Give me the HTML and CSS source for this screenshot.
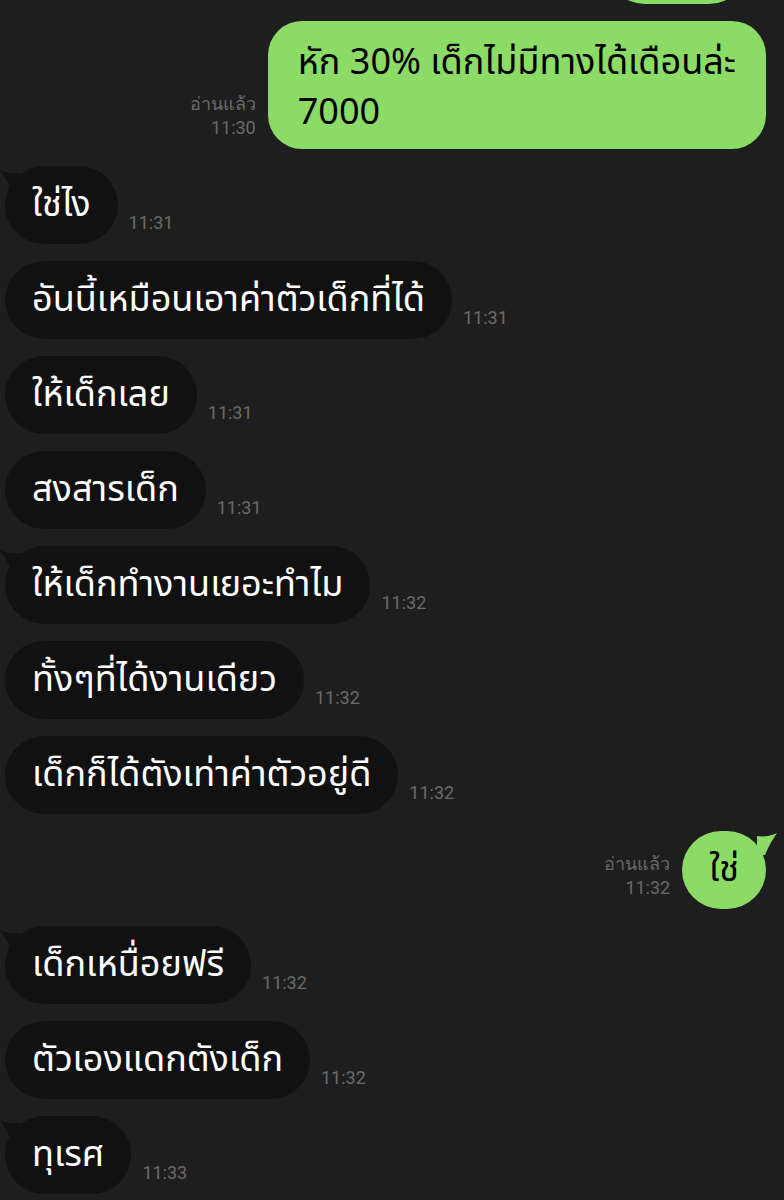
FILE: index.html
```html
<!DOCTYPE html>
<html lang="th">
<head>
  <meta charset="UTF-8" />
  <meta name="viewport" content="width=device-width, initial-scale=1.0" />
  <title>Chat</title>
  <link rel="stylesheet" href="styles.css">
</head>
<body>
  <main class="chat">
    <div class="row sent cut">
      <div class="bubble green stub"></div>
    </div>

    <div class="row sent">
      <div class="meta"><span>อ่านแล้ว</span><span>11:30</span></div>
      <div class="bubble green wide">หัก 30% เด็กไม่มีทางได้เดือนล่ะ<br>7000</div>
    </div>

    <div class="row recv">
      <div class="bubble dark first">ใช่ไง
        <svg class="tail-l" viewBox="0 0 20 22"><path d="M20 3 C12 4 6 3 0 0 C4 6 8 12 12 22 L20 22 Z" /></svg>
      </div>
      <div class="meta"><span>11:31</span></div>
    </div>
    <div class="row recv">
      <div class="bubble dark">อันนี้เหมือนเอาค่าตัวเด็กที่ได้</div>
      <div class="meta"><span>11:31</span></div>
    </div>
    <div class="row recv">
      <div class="bubble dark">ให้เด็กเลย</div>
      <div class="meta"><span>11:31</span></div>
    </div>
    <div class="row recv">
      <div class="bubble dark">สงสารเด็ก</div>
      <div class="meta"><span>11:31</span></div>
    </div>
    <div class="row recv">
      <div class="bubble dark first">ให้เด็กทำงานเยอะทำไม
        <svg class="tail-l" viewBox="0 0 20 22"><path d="M20 3 C12 4 6 3 0 0 C4 6 8 12 12 22 L20 22 Z" /></svg>
      </div>
      <div class="meta"><span>11:32</span></div>
    </div>
    <div class="row recv">
      <div class="bubble dark">ทั้งๆที่ได้งานเดียว</div>
      <div class="meta"><span>11:32</span></div>
    </div>
    <div class="row recv">
      <div class="bubble dark">เด็กก็ได้ตังเท่าค่าตัวอยู่ดี</div>
      <div class="meta"><span>11:32</span></div>
    </div>

    <div class="row sent">
      <div class="meta"><span>อ่านแล้ว</span><span>11:32</span></div>
      <div class="bubble green first">ใช่
        <svg class="tail-r" viewBox="0 0 20 22"><path d="M0 3 C8 4 14 3 20 0 C16 6 12 12 8 22 L0 22 Z" /></svg>
      </div>
    </div>

    <div class="row recv">
      <div class="bubble dark first">เด็กเหนื่อยฟรี
        <svg class="tail-l" viewBox="0 0 20 22"><path d="M20 3 C12 4 6 3 0 0 C4 6 8 12 12 22 L20 22 Z" /></svg>
      </div>
      <div class="meta"><span>11:32</span></div>
    </div>
    <div class="row recv">
      <div class="bubble dark">ตัวเองแดกตังเด็ก</div>
      <div class="meta"><span>11:32</span></div>
    </div>
    <div class="row recv">
      <div class="bubble dark first">ทุเรศ
        <svg class="tail-l" viewBox="0 0 20 22"><path d="M20 3 C12 4 6 3 0 0 C4 6 8 12 12 22 L20 22 Z" /></svg>
      </div>
      <div class="meta"><span>11:33</span></div>
    </div>
  </main>
</body>
</html>
```

FILE: styles.css
```css
body { margin: 0; background: #1e1e1e; font-family: "Noto Sans Thai", "Noto Sans", "DejaVu Sans", sans-serif; overflow: hidden; }
.chat { display: flex; flex-direction: column; gap: 17px; padding: 0 18px 0 5px; margin-top: -74px; }
.row { display: flex; align-items: flex-end; gap: 11px; }
.row.sent { justify-content: flex-end; gap: 12px; }
.bubble { position: relative; font-size: 36px; line-height: 46px; padding: 16px 27px; border-radius: 39px; white-space: nowrap; }
.bubble.dark { background: #111111; color: #ffffff; }
.bubble.green { background: #8cdb66; color: #000000; }
.bubble.wide { padding: 17px 30px 11px; border-radius: 34px; line-height: 50px; }
.stub { width: 88px; height: 46px; margin-right: 18px; }
.meta { display: flex; flex-direction: column; align-items: flex-end; margin-bottom: 9px; font-family: Roboto, Inter, sans-serif; font-size: 18px; line-height: 24px; color: #6a6a6a; }
.tail-l, .tail-r { position: absolute; top: 4px; width: 20px; height: 22px; }
.tail-l { left: -5px; fill: #111111; }
.tail-r { right: -11px; top: 2px; fill: #8cdb66; }
```
